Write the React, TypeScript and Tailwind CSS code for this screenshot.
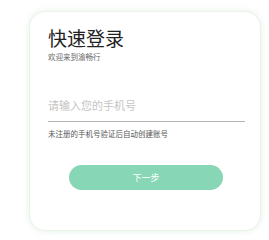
import React, { useState } from 'react';

const App: React.FC = () => {
  const [phone, setPhone] = useState('');

  return (
    <div className="w-[269px] h-[240px] bg-white pt-[11px] pl-[29px]" style={{ fontFamily: '"Noto Sans CJK SC", "Noto Sans", sans-serif' }}>
      <div className="w-[232px] h-[220px] rounded-[16px] border border-[#eaf3ea] bg-white shadow-[0_0_6px_rgba(150,200,150,0.25)] pl-[18px] pt-[14px]">
        <h1 className="text-[19px] leading-[24px] text-[#222]">快速登录</h1>
        <p className="mt-[2px] text-[7.5px] leading-[10px] text-[#666]">欢迎来到渝畅行</p>

        <div className="mt-[36px] w-[197px] border-b border-[#b5b5b5] pb-[9px]">
          <input
            type="text"
            value={phone}
            onChange={(e) => setPhone(e.target.value)}
            placeholder="请输入您的手机号"
            className="block w-full bg-transparent text-[11px] leading-[14px] h-[14px] text-[#333] placeholder:text-[#c4c4c4] outline-none"
          />
        </div>
        <p className="mt-[7px] text-[7.5px] leading-[10px] text-[#555]">未注册的手机号验证后自动创建账号</p>

        <button className="mt-[26px] ml-[21px] w-[154px] h-[25px] rounded-full bg-[#87d6b5] text-white text-[9px] leading-[25px] flex items-center justify-center">
          下一步
        </button>
      </div>
    </div>
  );
};

export default App;
